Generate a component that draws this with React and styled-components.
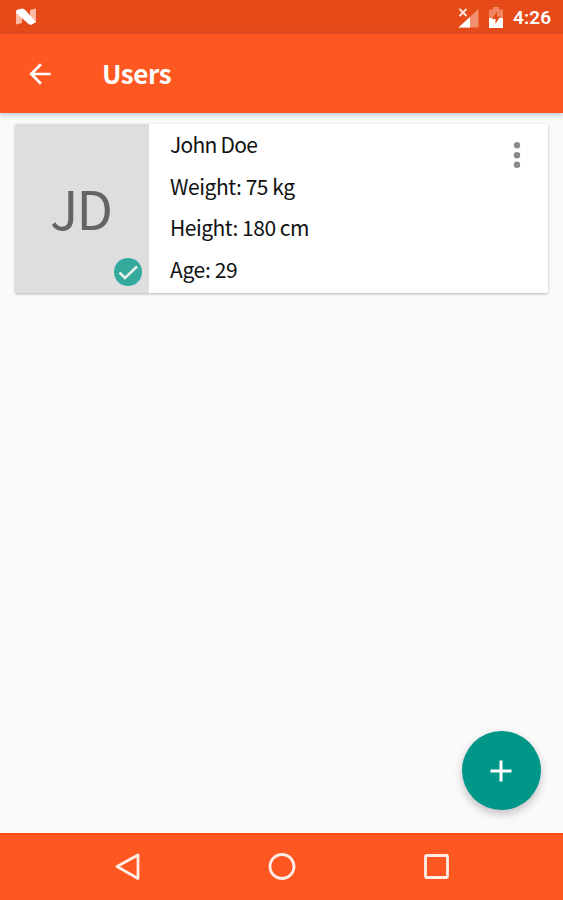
import styled, { createGlobalStyle } from "styled-components";

const GlobalStyle = createGlobalStyle`
  * {
    box-sizing: border-box;
  }
  body {
    margin: 0;
    font-family: "Noto Sans CJK SC", "Noto Sans", sans-serif;
  }
`;

const Screen = styled.div`
  display: flex;
  flex-direction: column;
  width: 100%;
  max-width: 563px;
  height: 100vh;
  background: #fafafa;
  overflow: hidden;
`;

const StatusBar = styled.div`
  flex: none;
  display: flex;
  align-items: center;
  height: 34px;
  padding: 0 11px 0 15px;
  background: #e64a19;
`;

const StatusIcons = styled.div`
  display: flex;
  align-items: center;
  gap: 10px;
  margin-left: auto;
`;

const Clock = styled.span`
  width: 39px;
  padding-top: 2px;
  font-family: Roboto, sans-serif;
  font-weight: 600;
  font-size: 19px;
  line-height: 34px;
  letter-spacing: 0.1px;
  color: #fff;
  white-space: nowrap;
`;

const Toolbar = styled.header`
  flex: none;
  display: flex;
  align-items: center;
  height: 79px;
  padding-left: 24px;
  background: #ff5722;
  box-shadow: 0 2px 5px rgba(60, 110, 150, 0.35);
  z-index: 1;
`;

const IconButton = styled.button`
  display: flex;
  padding: 0;
  border: none;
  background: none;
  cursor: pointer;
`;

const Title = styled.h1`
  margin: 0 0 2px 46px;
  font-weight: 700;
  font-size: 26px;
  line-height: 40px;
  letter-spacing: -0.4px;
  color: #fff;
`;

const Content = styled.main`
  flex: 1;
  display: flex;
  flex-direction: column;
  padding: 11px 15px 23px;
`;

const UserCard = styled.article`
  display: flex;
  height: 169px;
  border-radius: 2px;
  background: #fff;
  box-shadow: 0 1px 3px rgba(0, 0, 0, 0.28);
  overflow: hidden;
`;

const Avatar = styled.div`
  position: relative;
  display: flex;
  align-items: center;
  justify-content: center;
  width: 134px;
  padding: 0 3px 4px 0;
  background: #dedede;
  font-size: 53px;
  letter-spacing: -2px;
  color: #646464;
`;

const CheckBadge = styled.svg`
  position: absolute;
  right: 7px;
  bottom: 7px;
`;

const UserInfo = styled.div`
  flex: 1;
  padding: 0 0 0 21px;
`;

const InfoLine = styled.div`
  font-size: 21px;
  line-height: 41.5px;
  letter-spacing: ${(props) => props.$spacing}px;
  color: #111;
  white-space: nowrap;
`;

const MenuButton = styled(IconButton)`
  align-self: flex-start;
  margin: 15px 26.5px 0 0;
`;

const AddButton = styled.button`
  display: flex;
  align-items: center;
  justify-content: center;
  align-self: flex-end;
  width: 79px;
  height: 79px;
  margin: auto 7.5px 0 0;
  padding: 0;
  border: none;
  border-radius: 50%;
  background: #009688;
  box-shadow: 0 4px 8px rgba(50, 30, 50, 0.27);
  cursor: pointer;
`;

const NavBar = styled.nav`
  flex: none;
  display: flex;
  justify-content: center;
  align-items: center;
  gap: 126px;
  height: 67px;
  background: #ff5722;
  box-shadow: inset 0 2px 1px #fb4a0c;
`;

const users = [
  {
    name: "John Doe",
    initials: "JD",
    weight: "75 kg",
    height: "180 cm",
    age: 29,
  },
];

const NougatIcon = () => (
  <svg width="22" height="18" viewBox="0 0 22 18">
    <path d="M1 3.500 7 1.500V15l-6 1.500zM15 2l6-1.500V14l-6 2.500z" fill="#ffb9a2" />
    <path d="M1.500 2 7 .5Q9 .8 10.500 2.300L21 14l-4.500 2.800q-2 .2-3.500-1.300L1.200 5z" fill="#fff" />
  </svg>
);

const SignalIcon = () => (
  <svg width="21" height="22" viewBox="0 0 21 22">
    <path d="M20.500 3v18.500H.5z" fill="#f3906f" />
    <path d="M12 11v10.500H.5z" fill="#fff" />
    <path d="m1.500 3 7 7m0-7-7 7" stroke="#ffe3da" strokeWidth="2" />
  </svg>
);

const BatteryIcon = () => (
  <svg width="14" height="21" viewBox="0 0 14 21">
    <path d="M4 0h6v2.500h4V11H0V2.500h4z" fill="#f08560" />
    <path d="M0 11h14v10H0z" fill="#fff" />
    <path d="M8 4.500 3 12h3.500v5L11 9.500H8z" fill="#e64a19" />
  </svg>
);

const BackArrow = () => (
  <svg width="32" height="32" viewBox="0 0 24 24">
    <path d="M20 11H7.830l5.590-5.590L12 4l-8 8 8 8 1.410-1.410L7.830 13H20z" fill="#fff" />
  </svg>
);

const MoreIcon = () => (
  <svg width="10" height="32" viewBox="0 0 10 32">
    {[6.2, 16.2, 25.8].map((cy) => (
      <circle key={cy} cx="5" cy={cy} r="3.200" fill="#8b8b8b" />
    ))}
  </svg>
);

const UserItem = ({ user }) => (
  <UserCard>
    <Avatar>
      {user.initials}
      <CheckBadge width="28" height="28" viewBox="0 0 28 28">
        <circle cx="14" cy="14" r="14" fill="#35a99b" />
        <path d="m5.500 14.500 5.500 5.500L23 8.500" fill="none" stroke="#e8efed" strokeWidth="2.600" />
      </CheckBadge>
    </Avatar>
    <UserInfo>
      <InfoLine $spacing={-0.75}>{user.name}</InfoLine>
      <InfoLine $spacing={-0.45}>Weight: {user.weight}</InfoLine>
      <InfoLine $spacing={-0.5}>Height: {user.height}</InfoLine>
      <InfoLine $spacing={-0.35}>Age: {user.age}</InfoLine>
    </UserInfo>
    <MenuButton aria-label="More options">
      <MoreIcon />
    </MenuButton>
  </UserCard>
);

export default function App() {
  return (
    <Screen>
      <GlobalStyle />
      <StatusBar>
        <NougatIcon />
        <StatusIcons>
          <SignalIcon />
          <BatteryIcon />
          <Clock>4:26</Clock>
        </StatusIcons>
      </StatusBar>
      <Toolbar>
        <IconButton aria-label="Back">
          <BackArrow />
        </IconButton>
        <Title>Users</Title>
      </Toolbar>
      <Content>
        {users.map((user) => (
          <UserItem key={user.name} user={user} />
        ))}
        <AddButton aria-label="Add user">
          <svg width="22" height="22" viewBox="0 0 22 22">
            <path d="M11 .5v21M.5 11h21" stroke="#fff" strokeWidth="3" />
          </svg>
        </AddButton>
      </Content>
      <NavBar>
        <svg width="28" height="28" viewBox="0 0 28 28">
          <path d="M24 2v23.500L3 13.500z" fill="none" stroke="#ffeee8" strokeWidth="2.800" strokeLinejoin="round" />
        </svg>
        <svg width="28" height="28" viewBox="0 0 28 28">
          <circle cx="14" cy="13.500" r="12" fill="none" stroke="#ffeee8" strokeWidth="2.800" />
        </svg>
        <svg width="28" height="28" viewBox="0 0 28 28">
          <rect x="3.500" y="2.500" width="22" height="22" rx="1" fill="none" stroke="#ffeee8" strokeWidth="2.800" />
        </svg>
      </NavBar>
    </Screen>
  );
}
